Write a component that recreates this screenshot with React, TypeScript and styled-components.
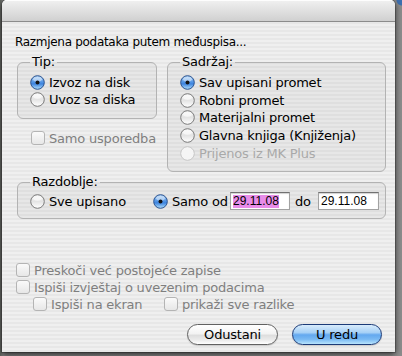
import React from "react";
import styled, { createGlobalStyle } from "styled-components";

const GlobalStyle = createGlobalStyle`
  html, body { margin: 0; padding: 0; }
  body { background: #7d7d7d; font-family: "DejaVu Sans", sans-serif; }
`;

const Desktop = styled.div`
  width: 402px;
  height: 356px;
  overflow: hidden;
  background:
    radial-gradient(circle at 100% 0, #3d6fb0 0 5px, transparent 6px),
    linear-gradient(to right, #5e625c 0, #7c7c7c 3px, #8c8c8c 100%);
`;

const Window = styled.div`
  margin-left: 2px;
  width: 393px;
  height: 352px;
  border-radius: 5px 5px 0 0;
  overflow: hidden;
  display: flex;
  flex-direction: column;
  background: repeating-linear-gradient(to bottom, #efefef 0 2px, #e7e7e7 2px 4px);
  box-shadow: 0 2px 6px rgba(0, 0, 0, 0.7), 0 0 0 1px rgba(0, 0, 0, 0.2);
  font: 13px "DejaVu Sans", sans-serif;
  letter-spacing: -0.2px;
  color: #000;
`;

const TitleBar = styled.div`
  flex: none;
  height: 21px;
  border-bottom: 1px solid #8c8c8c;
  background: linear-gradient(#f1f1f1, #d0d0d0);
  box-shadow: inset 0 1px 0 rgba(255, 255, 255, 0.85);
`;

const Content = styled.div`
  display: flex;
  flex-direction: column;
  align-items: flex-start;
  padding-left: 15px;
`;

const Heading = styled.div`
  margin: 12px 0 0 -2px;
  line-height: 17px;
  font-size: 12px;
  letter-spacing: -0.3px;
  white-space: nowrap;
`;

const TopRow = styled.div`
  display: flex;
  align-items: flex-start;
  gap: 10px;
  margin-top: 3px;
`;

const LeftCol = styled.div`
  display: flex;
  flex-direction: column;
  align-items: flex-start;
`;

const Group = styled.fieldset<{ $w: number; $pt: number; $pb: number; $mt?: number }>`
  box-sizing: border-box;
  width: ${(p) => p.$w}px;
  min-inline-size: 0;
  margin: ${(p) => p.$mt ?? 0}px 0 0 0;
  padding: ${(p) => p.$pt}px 8px ${(p) => p.$pb}px 12px;
  border: 1px solid #b3b3b3;
  border-radius: 6px;
  background: rgba(0, 0, 0, 0.03);
`;

const Legend = styled.legend`
  padding: 0 2px;
  margin: 0;
  line-height: 16px;
  font-size: 13px;
  white-space: nowrap;
`;

type Tone = "normal" | "dim" | "faint";
const toneColor = (t: Tone) => (t === "normal" ? "#000" : t === "dim" ? "#7f7f7f" : "#a9a9a9");

const Row = styled.div<{ $h: number; $tone?: Tone; $w?: number; $ml?: number }>`
  display: flex;
  align-items: center;
  gap: 4px;
  height: ${(p) => p.$h}px;
  ${(p) => (p.$w ? `width: ${p.$w}px; flex: none;` : "")}
  margin-left: ${(p) => p.$ml ?? 0}px;
  color: ${(p) => toneColor(p.$tone ?? "normal")};
  white-space: nowrap;
`;

const Stack = styled.div`
  display: flex;
  flex-direction: column;
`;

const InlineRow = styled.div`
  display: flex;
  align-items: center;
  height: 20px;
`;

const FixedLabel = styled.span<{ $w: number }>`
  display: inline-block;
  width: ${(p) => p.$w}px;
  flex: none;
`;

const DoLabel = styled.span`
  box-sizing: border-box;
  width: 28px;
  padding-left: 5px;
  flex: none;
`;

const Field = styled.div<{ $w: number }>`
  box-sizing: border-box;
  width: ${(p) => p.$w}px;
  height: 18px;
  flex: none;
  display: flex;
  align-items: center;
  padding-left: 2px;
  background: #fff;
  border: 1px solid #a2a2a2;
  border-top-color: #717171;
  box-shadow: inset 0 1px 1px rgba(0, 0, 0, 0.18);
  font: 12px "Liberation Sans", Arial, sans-serif;
  letter-spacing: 0;
  color: #000;
`;

const Selected = styled.span`
  background: #e88ce9;
  line-height: 13px;
`;

const Options = styled.div`
  display: flex;
  flex-direction: column;
  margin: 42.5px 0 0 -1px;
`;

const SubRow = styled.div`
  display: flex;
  margin-left: 17px;
`;

const ButtonRow = styled.div`
  align-self: stretch;
  display: flex;
  justify-content: flex-end;
  gap: 14px;
  margin-top: 11.5px;
  padding-right: 13px;
`;

const Button = styled.button<{ $w: number; $primary?: boolean }>`
  box-sizing: border-box;
  width: ${(p) => p.$w}px;
  height: 21px;
  padding: 0;
  border-radius: 11px;
  font: 13px "DejaVu Sans", sans-serif;
  letter-spacing: -0.2px;
  color: #000;
  line-height: 19px;
  border: 1px solid ${(p) => (p.$primary ? "#1c3b78" : "#616161")};
  background: ${(p) =>
    p.$primary
      ? "linear-gradient(#d9ecfc 0%, #a6d0f6 40%, #63a8ef 52%, #79b9f3 75%, #b8e4fd 100%)"
      : "linear-gradient(#ffffff 0%, #f3f3f3 45%, #dedede 55%, #ececec 80%, #ffffff 100%)"};
  box-shadow: 0 1px 1px rgba(0, 0, 0, 0.15);
`;

const Radio: React.FC<{ on?: boolean; disabled?: boolean }> = ({ on, disabled }) => (
  <svg width="15" height="15" viewBox="0 0 15 15" style={{ flex: "none" }}>
    <defs>
      <linearGradient id="radOn" x1="0" y1="0" x2="0" y2="1">
        <stop offset="0" stopColor="#b4d6f7" />
        <stop offset="0.45" stopColor="#5597e6" />
        <stop offset="0.6" stopColor="#3d84df" />
        <stop offset="1" stopColor="#b3e1fc" />
      </linearGradient>
      <linearGradient id="radOff" x1="0" y1="0" x2="0" y2="1">
        <stop offset="0" stopColor="#f4f4f4" />
        <stop offset="0.5" stopColor="#e4e4e4" />
        <stop offset="1" stopColor="#ffffff" />
      </linearGradient>
    </defs>
    <circle
      cx="7.5"
      cy="7.5"
      r="6.8"
      fill={on ? "url(#radOn)" : disabled ? "#f5f5f5" : "url(#radOff)"}
      stroke={on ? "#2a528f" : disabled ? "#c6c6c6" : "#7a7a7a"}
      strokeWidth="1"
    />
    {!disabled && <ellipse cx="7.5" cy="4.3" rx="4.4" ry="2.4" fill="#fff" opacity={on ? 0.45 : 0.6} />}
    {on && <circle cx="7.5" cy="7.6" r="2" fill="#141414" />}
  </svg>
);

const Check: React.FC = () => (
  <svg width="14" height="14" viewBox="0 0 14 14" style={{ flex: "none" }}>
    <defs>
      <linearGradient id="chkOff" x1="0" y1="0" x2="0" y2="1">
        <stop offset="0" stopColor="#fbfbfb" />
        <stop offset="1" stopColor="#e6e6e6" />
      </linearGradient>
    </defs>
    <rect x="0.5" y="0.5" width="13" height="13" rx="2.5" fill="url(#chkOff)" stroke="#b4b4b4" />
  </svg>
);

const contents: { label: string; on?: boolean; disabled?: boolean }[] = [
  { label: "Sav upisani promet", on: true },
  { label: "Robni promet" },
  { label: "Materijalni promet" },
  { label: "Glavna knjiga (Knjiženja)" },
  { label: "Prijenos iz MK Plus", disabled: true },
];

export default function App() {
  return (
    <>
      <GlobalStyle />
      <Desktop>
        <Window>
          <TitleBar />
          <Content>
            <Heading>Razmjena podataka putem međuspisa...</Heading>
            <TopRow>
              <LeftCol>
                <Group $w={140} $pt={3.5} $pb={10.5}>
                  <Legend>Tip:</Legend>
                  <Stack>
                    <Row $h={17}>
                      <Radio on />
                      Izvoz na disk
                    </Row>
                    <Row $h={17}>
                      <Radio />
                      Uvoz sa diska
                    </Row>
                  </Stack>
                </Group>
                <Row $h={17} $tone="dim" $ml={14} style={{ marginTop: 10.5 }}>
                  <Check />
                  Samo usporedba
                </Row>
              </LeftCol>
              <Group $w={219} $pt={3.5} $pb={8.75}>
                <Legend>Sadržaj:</Legend>
                <Stack>
                  {contents.map((c) => (
                    <Row key={c.label} $h={17.75} $tone={c.disabled ? "faint" : "normal"}>
                      <Radio on={c.on} disabled={c.disabled} />
                      {c.label}
                    </Row>
                  ))}
                </Stack>
              </Group>
            </TopRow>
            <Group $w={369} $pt={1} $pb={7} $mt={2}>
              <Legend>Razdoblje:</Legend>
              <InlineRow>
                <Row $h={20} $w={123}>
                  <Radio />
                  Sve upisano
                </Row>
                <Row $h={20}>
                  <Radio on />
                  <FixedLabel $w={58}>Samo od</FixedLabel>
                </Row>
                <Field $w={60}>
                  <Selected>29.11.08</Selected>
                </Field>
                <DoLabel>do</DoLabel>
                <Field $w={61}>29.11.08</Field>
              </InlineRow>
            </Group>
            <Options>
              <Row $h={17} $tone="dim">
                <Check />
                Preskoči već postojeće zapise
              </Row>
              <Row $h={17} $tone="dim">
                <Check />
                Ispiši izvještaj o uvezenim podacima
              </Row>
              <SubRow>
                <Row $h={17} $tone="dim" $w={131}>
                  <Check />
                  Ispiši na ekran
                </Row>
                <Row $h={17} $tone="dim">
                  <Check />
                  prikaži sve razlike
                </Row>
              </SubRow>
            </Options>
            <ButtonRow>
              <Button $w={91}>Odustani</Button>
              <Button $w={90} $primary>
                U redu
              </Button>
            </ButtonRow>
          </Content>
        </Window>
      </Desktop>
    </>
  );
}
